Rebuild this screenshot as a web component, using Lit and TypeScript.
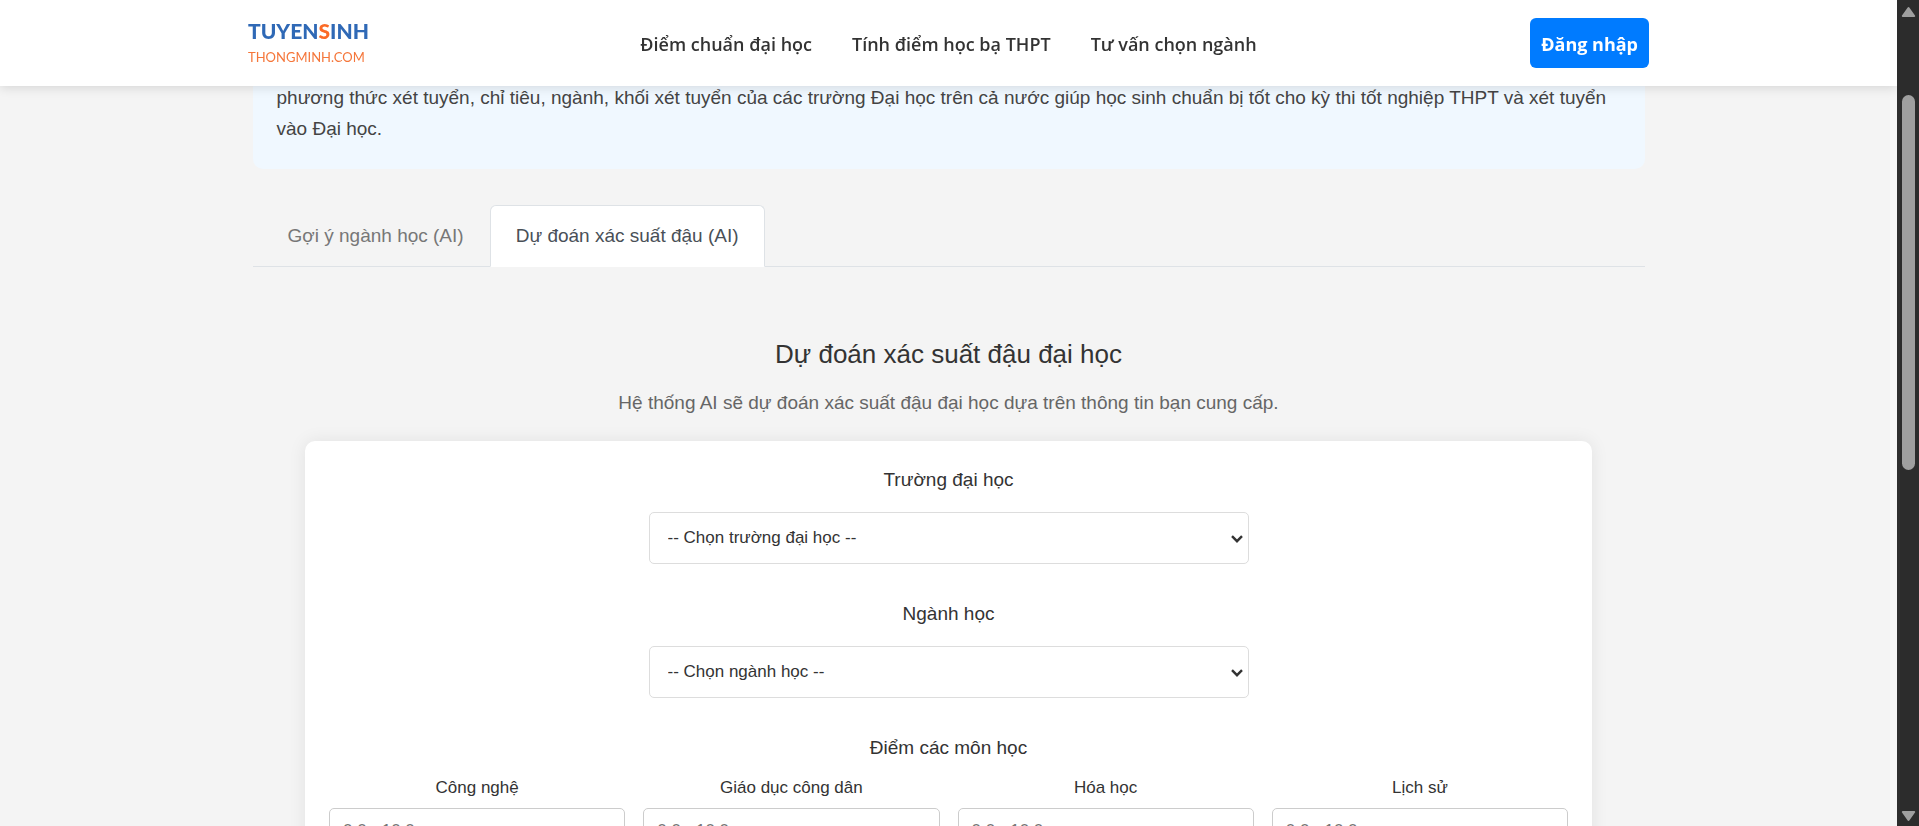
import { LitElement, html, css } from "lit";
import { customElement, property } from "lit/decorators.js";

@customElement("site-header")
class SiteHeader extends LitElement {
  static styles = css`
    :host {
      display: block;
      background: #fff;
      box-shadow: 0 2px 10px rgba(0, 0, 0, 0.12);
      font-family: "Open Sans", "Noto Sans", sans-serif;
    }
    .bar {
      box-sizing: border-box;
      max-width: 1401px;
      min-height: 86px;
      margin: 0 auto;
      display: grid;
      grid-template-columns: 1fr auto 1fr;
      align-items: center;
    }
    .logo {
      justify-self: start;
      display: flex;
      flex-direction: column;
      gap: 2px;
      text-decoration: none;
      font-family: Lato, sans-serif;
    }
    .logo-top {
      color: #2f69b6;
      font-size: 21px;
      font-weight: 900;
      line-height: 26px;
    }
    .logo-accent {
      color: #fb6a26;
    }
    .logo-bottom {
      color: #f5763a;
      font-size: 13px;
      line-height: 22px;
    }
    .nav {
      display: flex;
      gap: 40px;
      padding-top: 2px;
    }
    .link {
      color: #333;
      font-size: 18px;
      font-weight: 600;
      line-height: 28px;
      text-decoration: none;
    }
    .login {
      justify-self: end;
      border: 0;
      border-radius: 6px;
      padding: 12px 11px 10px;
      background: #007bff;
      color: #fff;
      font: 700 18px/28px "Open Sans", "Noto Sans", sans-serif;
      cursor: pointer;
    }
  `;

  render() {
    return html`
      <header class="bar">
        <a class="logo" href="#">
          <span class="logo-top">TUYEN<span class="logo-accent">S</span>INH</span>
          <span class="logo-bottom">THONGMINH.COM</span>
        </a>
        <nav class="nav">
          <a class="link" href="#diem-chuan">Điểm chuẩn đại học</a>
          <a class="link" href="#hoc-ba">Tính điểm học bạ THPT</a>
          <a class="link" href="#tu-van">Tư vấn chọn ngành</a>
        </nav>
        <button class="login" type="button">Đăng nhập</button>
      </header>
    `;
  }
}

@customElement("page-scrollbar")
class PageScrollbar extends LitElement {
  static styles = css`
    :host {
      box-sizing: border-box;
      display: flex;
      flex-direction: column;
      align-items: center;
      padding: 6px 0 4px;
      background: #2c2c2c;
    }
    .arrow {
      width: 15px;
      height: 12px;
      fill: #9f9f9f;
      stroke: #9f9f9f;
      stroke-width: 2;
      stroke-linejoin: round;
    }
    .before {
      flex: 77;
    }
    .thumb {
      flex: 375;
      width: 13px;
      border-radius: 7px;
      background: #9f9f9f;
    }
    .after {
      flex: 340;
    }
  `;

  render() {
    return html`
      <svg class="arrow" viewBox="0 0 15 12"><path d="M7.5 2 L13.2 10 H1.8 Z" /></svg>
      <div class="before"></div>
      <div class="thumb"></div>
      <div class="after"></div>
      <svg class="arrow" viewBox="0 0 15 12"><path d="M1.8 2 H13.2 L7.5 10 Z" /></svg>
    `;
  }
}

@customElement("select-field")
class SelectField extends LitElement {
  @property() label = "";
  @property() placeholder = "";

  static styles = css`
    :host {
      display: flex;
      flex-direction: column;
      align-items: center;
      gap: 17px;
    }
    .label {
      color: #333;
      font-size: 19px;
      line-height: 30px;
    }
    .control {
      display: grid;
      align-items: center;
      width: 100%;
      max-width: 600px;
    }
    .select {
      grid-area: 1 / 1;
      appearance: none;
      box-sizing: border-box;
      width: 100%;
      height: 52px;
      margin: 0;
      padding: 0 18px 2px;
      border: 1px solid #ddd;
      border-radius: 5px;
      background: #fff;
      color: #333;
      font: 17px "Liberation Sans", Arial, sans-serif;
    }
    .chevron {
      grid-area: 1 / 1;
      justify-self: end;
      width: 12px;
      height: 9px;
      margin-right: 6px;
      fill: none;
      stroke: #333;
      stroke-width: 2.4;
      pointer-events: none;
    }
  `;

  render() {
    return html`
      <label class="label" for="field">${this.label}</label>
      <div class="control">
        <select class="select" id="field">
          <option>${this.placeholder}</option>
        </select>
        <svg class="chevron" viewBox="0 0 12 9"><path d="M1 2.2 L6 7.2 L11 2.2" /></svg>
      </div>
    `;
  }
}

@customElement("app-root")
class AppRoot extends LitElement {
  private subjects = ["Công nghệ", "Giáo dục công dân", "Hóa học", "Lịch sử"];

  static styles = css`
    :host {
      display: grid;
      grid-template-columns: minmax(0, 1fr) 22px;
      height: 100vh;
      overflow: hidden;
      background: #f4f4f4;
      color: #333;
      font-family: "Liberation Sans", Arial, sans-serif;
    }
    .page {
      min-height: 0;
      overflow: hidden;
    }
    .top {
      position: sticky;
      top: 0;
      z-index: 1;
    }
    .main {
      max-width: 1392px;
      margin: -4px auto 0;
    }
    .intro {
      margin: 0;
      padding: 0 24px 25px;
      border-radius: 0 0 10px 10px;
      background: #f0f8ff;
      color: #444;
      font-size: 19px;
      line-height: 31px;
    }
    .tabs {
      display: flex;
      margin-top: 36px;
      padding-left: 9px;
      border-bottom: 1px solid #dee2e6;
    }
    .tab {
      box-sizing: border-box;
      height: 62px;
      margin: 0 0 -1px;
      padding: 0 25px;
      border: 1px solid transparent;
      border-radius: 6px 6px 0 0;
      background: none;
      color: #777;
      font: 19px "Liberation Sans", Arial, sans-serif;
      cursor: pointer;
    }
    .tab-active {
      border-color: #dee2e6 #dee2e6 #fff;
      background: #fff;
      color: #495057;
    }
    .title {
      margin: 69px 0 0;
      font-size: 26px;
      font-weight: 400;
      line-height: 36px;
      text-align: center;
    }
    .lead {
      margin: 16px 0 0;
      color: #666;
      font-size: 19px;
      line-height: 30px;
      text-align: center;
    }
    .card {
      display: flex;
      flex-direction: column;
      max-width: 1239px;
      margin: 23px auto 0;
      padding: 24px;
      border-radius: 10px;
      background: #fff;
      box-shadow: 0 0 18px rgba(0, 0, 0, 0.08);
      gap: 35px;
    }
    .scores {
      margin: 0;
      padding: 0;
      border: 0;
      min-width: 0;
    }
    .legend {
      width: 100%;
      padding: 0;
      font-size: 19px;
      line-height: 30px;
      text-align: center;
    }
    .grid {
      display: grid;
      grid-template-columns: repeat(4, minmax(0, 1fr));
      gap: 18px;
      padding-top: 12px;
    }
    .score {
      display: flex;
      flex-direction: column;
      gap: 7px;
      text-align: center;
    }
    .score-label {
      font-size: 17px;
      line-height: 26px;
    }
    .score-input {
      box-sizing: border-box;
      width: 100%;
      height: 46px;
      padding: 0 13px;
      border: 1px solid #ccc;
      border-radius: 5px;
      background: #fff;
      color: #333;
      font: 17px "Liberation Sans", Arial, sans-serif;
    }
    .score-input::placeholder {
      color: #757575;
    }
  `;

  render() {
    return html`
      <div class="page">
        <site-header class="top"></site-header>
        <main class="main">
          <p class="intro">
            phương thức xét tuyển, chỉ tiêu, ngành, khối xét tuyển của các trường Đại học trên cả nước giúp học sinh
            chuẩn bị tốt cho kỳ thi tốt nghiệp THPT và xét tuyển vào Đại học.
          </p>
          <div class="tabs" role="tablist">
            <button class="tab" type="button" role="tab" aria-selected="false">Gợi ý ngành học (AI)</button>
            <button class="tab tab-active" type="button" role="tab" aria-selected="true">Dự đoán xác suất đậu (AI)</button>
          </div>
          <h2 class="title">Dự đoán xác suất đậu đại học</h2>
          <p class="lead">Hệ thống AI sẽ dự đoán xác suất đậu đại học dựa trên thông tin bạn cung cấp.</p>
          <form class="card">
            <select-field label="Trường đại học" placeholder="-- Chọn trường đại học --"></select-field>
            <select-field label="Ngành học" placeholder="-- Chọn ngành học --"></select-field>
            <fieldset class="scores">
              <legend class="legend">Điểm các môn học</legend>
              <div class="grid">
                ${this.subjects.map(
                  (name, i) => html`
                    <div class="score">
                      <label class="score-label" for="score-${i}">${name}</label>
                      <input class="score-input" id="score-${i}" type="text" inputmode="decimal" placeholder="0.0 - 10.0" />
                    </div>
                  `
                )}
              </div>
            </fieldset>
          </form>
        </main>
      </div>
      <page-scrollbar></page-scrollbar>
    `;
  }
}
